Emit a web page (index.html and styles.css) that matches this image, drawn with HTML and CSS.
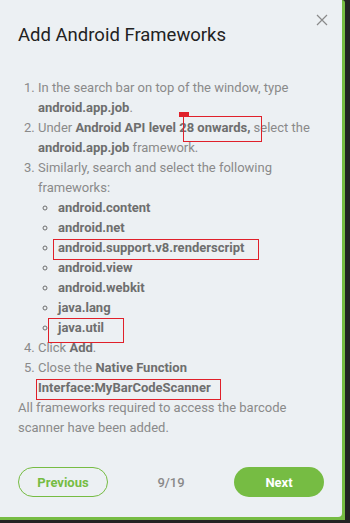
FILE: index.html
```html
<!DOCTYPE html>
<html lang="en">

<head>
    <meta charset="UTF-8">
    <meta name="viewport" content="width=device-width, initial-scale=1.0">
    <title>Add Android Frameworks</title>
    <link rel="stylesheet" href="styles.css">
</head>

<body>
    <div class="frame">
        <div class="card">
            <button class="close" aria-label="Close">
                <svg width="12" height="12" viewBox="0 0 12 12">
                    <path d="M1 1 L11 11 M11 1 L1 11" stroke="#8a8a8a" stroke-width="1.2" fill="none" />
                </svg>
            </button>

            <h1 class="title">Add Android Frameworks</h1>

            <ol class="steps">
                <li>In the search bar on top of the window, type <b>android.app.job</b>.</li>
                <li>Under <b>Android API level 28 onwards,</b> select the <b>android.app.job</b> framework.</li>
                <li>Similarly, search and select the following frameworks:
                    <ul class="frameworks">
                        <li>android.content</li>
                        <li>android.net</li>
                        <li>android.support.v8.renderscript</li>
                        <li>android.view</li>
                        <li>android.webkit</li>
                        <li>java.lang</li>
                        <li>java.util</li>
                    </ul>
                </li>
                <li>Click <b>Add</b>.</li>
                <li>Close the <b>Native Function Interface:MyBarCodeScanner</b></li>
            </ol>
            <p class="note">All frameworks required to access the barcode scanner have been added.</p>

            <div class="footer">
                <button class="btn btn-outline">Previous</button>
                <span class="count">9/19</span>
                <button class="btn btn-fill">Next</button>
            </div>

            <!-- review marks drawn over the text -->
            <span class="mark mark-tab"></span>
            <span class="mark box-api"></span>
            <span class="mark box-render"></span>
            <span class="mark box-util"></span>
            <span class="mark box-iface"></span>
        </div>
    </div>
</body>

</html>
```

FILE: styles.css
```css
body {
    margin: 0;
    background-color: #232323;
    font-family: Roboto, "Liberation Sans", Arial, sans-serif;
}

.frame {
    width: 345px;
    height: 520px;
    background-color: #76bc43;
    border-top-right-radius: 3px;
}

.card {
    position: relative;
    box-sizing: border-box;
    width: 342px;
    height: 517px;
    padding: 23px 18px 20px 18px;
    background-color: #ecf0f3;
    border-bottom-right-radius: 4px;
    display: flex;
    flex-direction: column;
}

.close {
    position: absolute;
    top: 14px;
    right: 14px;
    width: 12px;
    height: 12px;
    padding: 0;
    border: none;
    background: none;
    cursor: pointer;
}

.close svg {
    display: block;
}

.title {
    margin: 0;
    font-size: 18.5px;
    line-height: 24px;
    font-weight: 400;
    color: #222;
}

.steps {
    margin: 31px 0 0 0;
    padding-left: 20px;
    font-size: 13px;
    line-height: 20px;
    color: #8a8a8a;
}

.steps b,
.frameworks {
    font-weight: 700;
    color: #6e6e6e;
}

.frameworks {
    margin: 0;
    padding-left: 20px;
    list-style: circle;
}

.note {
    margin: 0;
    font-size: 13px;
    line-height: 20px;
    color: #8a8a8a;
}

.footer {
    margin-top: auto;
    display: flex;
    align-items: center;
    justify-content: space-between;
}

.btn {
    width: 90px;
    height: 30px;
    border-radius: 15px;
    font-family: inherit;
    font-size: 13px;
    font-weight: 700;
    cursor: pointer;
}

.btn-outline {
    border: 1px solid #76bc43;
    background: none;
    color: #76bc43;
}

.btn-fill {
    border: none;
    background-color: #76bc43;
    color: #fff;
}

.count {
    font-size: 13px;
    font-weight: 500;
    color: #8a8a8a;
}

/* red annotation boxes */
.mark {
    position: absolute;
    box-sizing: border-box;
    border: 1px solid #e0202a;
}

.mark-tab {
    left: 179px;
    top: 112px;
    width: 10px;
    height: 5px;
    background-color: #e0202a;
}

.box-api {
    left: 183px;
    top: 116px;
    width: 79px;
    height: 26px;
}

.box-render {
    left: 53px;
    top: 239px;
    width: 206px;
    height: 21px;
}

.box-util {
    left: 48px;
    top: 318px;
    width: 76px;
    height: 25px;
}

.box-iface {
    left: 36px;
    top: 379px;
    width: 185px;
    height: 21px;
}
```
